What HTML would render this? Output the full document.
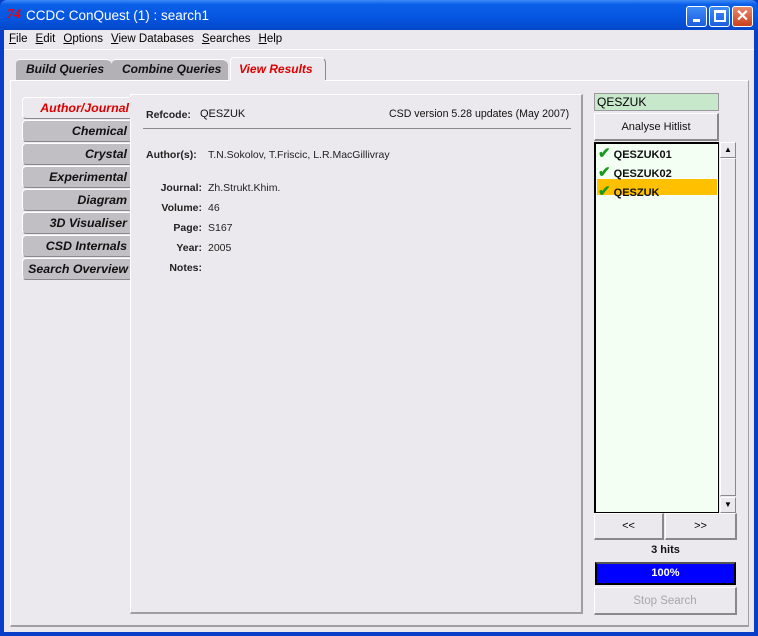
<!DOCTYPE html>
<html><head><meta charset="utf-8"><style>
*{box-sizing:border-box;margin:0;padding:0}
body{width:758px;height:636px;overflow:hidden;font-family:"Liberation Sans",sans-serif;background:#0a3dc8;position:relative}
.a{position:absolute}
#title{left:0;top:0;width:758px;height:30px;background:linear-gradient(#3d8af7 0%,#0a5fe8 15%,#0555e0 60%,#0447c8 100%);border-radius:7px 7px 0 0}
#win{left:4px;top:30px;width:750px;height:602px;background:#ebe9ed}
.tb{top:6px;width:21px;height:21px;border:1px solid #fff;border-radius:3px;background:linear-gradient(#3f8cf7,#1b5de0)}
.b{font-weight:bold;font-style:italic}
.stab{left:22px;width:108px;height:22px;background:#c1bfc4;border-top:1px solid #fff;border-left:1px solid #fff;border-bottom:1px solid #8a888c;border-radius:4px 0 0 4px;text-align:right;padding-right:3px;font-size:12.4px;line-height:20px;font-weight:bold;font-style:italic;color:#111;white-space:nowrap}
.lbl{font-size:10.5px;font-weight:bold;color:#222;text-align:right;width:60px;left:142px}
.val{font-size:10.5px;color:#222;left:208px}
</style></head><body>
<div id="title" class="a"></div>
<div class="a" style="left:7px;top:7px;color:#e00;font-weight:bold;font-style:italic;font-size:14px;font-family:'Liberation Serif',serif">74</div>
<div class="a" style="left:26px;top:8px;color:#fff;font-size:13.5px">CCDC ConQuest (1) : search1</div>
<div class="a tb" style="left:686px"><div class="a" style="left:6px;top:12px;width:7px;height:3px;background:#fff"></div></div>
<div class="a tb" style="left:709px"><div class="a" style="left:4px;top:3px;width:12px;height:12px;border:2px solid #fff;border-top-width:3px"></div></div>
<div class="a tb" style="left:732px;background:linear-gradient(#e88a6a,#c9401e);color:#fff;font-size:16px;font-weight:bold;text-align:center;line-height:19px">✕</div>
<div id="win" class="a"></div>
<div class="a" style="left:9px;top:33px;font-size:11.5px;color:#000">
<span style="margin-right:8px"><u>F</u>ile</span><span style="margin-right:8px"><u>E</u>dit</span><span style="margin-right:8px"><u>O</u>ptions</span><span style="margin-right:8px"><u>V</u>iew Databases</span><span style="margin-right:8px"><u>S</u>earches</span><span><u>H</u>elp</span></div>
<div class="a" style="left:4px;top:49px;width:750px;height:1px;background:#fff"></div>
<div class="a b" style="left:16px;top:59px;width:96px;height:21px;background:#b3b1b6;border-radius:4px 6px 0 0;border-top:1px solid #fff;font-size:12px;line-height:19px;padding-left:10px;color:#111">Build Queries</div>
<div class="a b" style="left:112px;top:59px;width:116px;height:21px;background:#b3b1b6;border-radius:4px 6px 0 0;border-top:1px solid #fff;font-size:12px;line-height:19px;padding-left:10px;color:#111">Combine Queries</div>
<div class="a b" style="left:230px;top:57px;width:96px;height:24px;background:#ebe9ed;border-radius:4px 6px 0 0;border-top:1px solid #fff;border-left:1px solid #fff;border-right:1px solid #8a888c;font-size:12px;line-height:22px;padding-left:8px;color:#d00">View Results</div>
<div class="a" style="left:10px;top:80px;width:739px;height:547px;border-top:1px solid #fff;border-left:1px solid #fff;border-right:1px solid #a09ea3;border-bottom:2px solid #a09ea3"></div>
<div class="a" style="left:230px;top:80px;width:95px;height:2px;background:#ebe9ed"></div>
<div class="a stab" style="top:97px;background:#ebe9ed;color:#d00;width:110px">Author/Journal</div>
<div class="a stab" style="top:120px">Chemical</div>
<div class="a stab" style="top:143px">Crystal</div>
<div class="a stab" style="top:166px">Experimental</div>
<div class="a stab" style="top:189px">Diagram</div>
<div class="a stab" style="top:212px">3D Visualiser</div>
<div class="a stab" style="top:235px">CSD Internals</div>
<div class="a stab" style="top:258px;padding-right:2px">Search Overview</div>
<div class="a" style="left:130px;top:94px;width:453px;height:520px;border-top:1px solid #fff;border-left:1px solid #fff;border-right:2px solid #a09ea3;border-bottom:2px solid #a09ea3"></div>
<div class="a" style="left:130px;top:97px;width:2px;height:22px;background:#ebe9ed"></div>
<div class="a" style="left:146px;top:109px;font-size:10.5px;font-weight:bold;color:#222">Refcode:</div>
<div class="a" style="left:200px;top:108px;font-size:11px;color:#111">QESZUK</div>
<div class="a" style="left:389px;top:108px;font-size:10.6px;color:#111">CSD version 5.28 updates (May 2007)</div>
<div class="a" style="left:143px;top:128px;width:428px;height:1px;background:#8a888c"></div>
<div class="a" style="left:146px;top:149px;font-size:10.5px;font-weight:bold;color:#222">Author(s):</div>
<div class="a val" style="top:149px">T.N.Sokolov, T.Friscic, L.R.MacGillivray</div>
<div class="a lbl" style="top:182px">Journal:</div><div class="a val" style="top:182px">Zh.Strukt.Khim.</div>
<div class="a lbl" style="top:202px">Volume:</div><div class="a val" style="top:202px">46</div>
<div class="a lbl" style="top:222px">Page:</div><div class="a val" style="top:222px">S167</div>
<div class="a lbl" style="top:242px">Year:</div><div class="a val" style="top:242px">2005</div>
<div class="a lbl" style="top:262px">Notes:</div>
<div class="a" style="left:594px;top:93px;width:125px;height:18px;background:#c8e8cc;border:1px solid #9a989c;font-size:12px;line-height:16px;padding-left:2px;color:#000">QESZUK</div>
<div class="a" style="left:594px;top:113px;width:125px;height:28px;background:#ebe9ed;border-top:1px solid #fff;border-left:1px solid #fff;border-right:2px solid #8a888c;border-bottom:2px solid #8a888c;font-size:11px;line-height:26px;text-align:center;color:#111">Analyse Hitlist</div>
<div class="a" style="left:594px;top:142px;width:125px;height:371px;background:#f2fff2;border:2px solid #000;border-right-width:1px;border-bottom-width:1px"></div>
<div class="a" style="left:597px;top:179px;width:120px;height:16px;background:#ffc000"></div>
<div class="a" style="left:598px;top:145px;font-size:11px;font-weight:bold;line-height:17px;color:#111">
<div><span style="color:#1a9a1a;font-size:15px">✔</span> QESZUK01</div>
<div><span style="color:#1a9a1a;font-size:15px">✔</span> QESZUK02</div>
<div><span style="color:#1a9a1a;font-size:15px">✔</span> QESZUK</div></div>
<div class="a" style="left:720px;top:142px;width:16px;height:371px;background:#ebe9ed;border-left:1px solid #ccc"></div>
<div class="a" style="left:720px;top:142px;width:16px;height:16px;border-top:1px solid #fff;border-left:1px solid #fff;border-right:1px solid #8a888c;border-bottom:1px solid #8a888c;font-size:8px;text-align:center;line-height:14px">▲</div>
<div class="a" style="left:720px;top:158px;width:16px;height:338px;border-top:1px solid #fff;border-left:1px solid #fff;border-right:1px solid #8a888c;border-bottom:1px solid #8a888c"></div>
<div class="a" style="left:720px;top:497px;width:16px;height:16px;border-top:1px solid #fff;border-left:1px solid #fff;border-right:1px solid #8a888c;border-bottom:1px solid #8a888c;font-size:8px;text-align:center;line-height:14px">▼</div>
<div class="a" style="left:594px;top:513px;width:70px;height:27px;border-top:1px solid #fff;border-left:1px solid #fff;border-right:2px solid #8a888c;border-bottom:2px solid #8a888c;font-size:11px;text-align:center;line-height:25px">&lt;&lt;</div>
<div class="a" style="left:665px;top:513px;width:72px;height:27px;border-top:1px solid #fff;border-left:1px solid #fff;border-right:2px solid #8a888c;border-bottom:2px solid #8a888c;font-size:11px;text-align:center;line-height:25px">&gt;&gt;</div>
<div class="a" style="left:594px;top:544px;width:143px;text-align:center;font-size:11px;font-weight:bold;color:#111">3 hits</div>
<div class="a" style="left:595px;top:562px;width:141px;height:23px;background:#0000ff;border:2px solid #000;border-top-color:#555;color:#fff;font-size:11px;font-weight:bold;text-align:center;line-height:19px">100%</div>
<div class="a" style="left:594px;top:587px;width:143px;height:28px;border-top:1px solid #fff;border-left:1px solid #fff;border-right:2px solid #8a888c;border-bottom:2px solid #8a888c;font-size:11.5px;text-align:center;line-height:26px;color:#a8a6aa">Stop Search</div>
</body></html>
